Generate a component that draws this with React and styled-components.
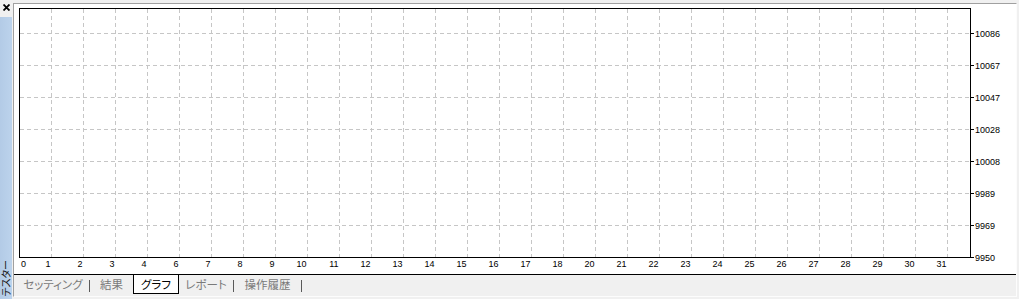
import React from "react";
import styled, { createGlobalStyle } from "styled-components";

const GlobalStyle = createGlobalStyle`
  html, body {
    margin: 0;
    padding: 0;
    background: #f0f0f0;
  }
  body {
    font-family: "Noto Sans CJK JP", "Liberation Sans", sans-serif;
  }
`;

const xLabels = [0, 1, 2, 3, 4, 6, 7, 8, 9, 10, 11, 12, 13, 14, 15, 16, 17, 18, 20, 21, 22, 23, 24, 25, 26, 27, 28, 29, 30, 31];
const yLabels = [9950, 9969, 9989, 10008, 10028, 10047, 10067, 10086];

// widths taken from the tab strip
const tabs = [
  { label: "セッティング", w: 72, sep: true },
  { label: "結果", w: 43 },
  { label: "グラフ", w: 46, active: true },
  { label: "レポート", w: 54, sep: true },
  { label: "操作履歴", w: 67, sep: true },
];

const CHART_W = 951;
const CHART_H = 249;
const CELL = 32;

const Chart = () => {
  const vLines = [];
  for (let k = 1; k * CELL < CHART_W; k++) vLines.push(k * CELL);
  const hLines = [];
  for (let j = 1; j * CELL < CHART_H; j++) hLines.push(CHART_H - j * CELL);

  return (
    <svg width="996" height="266" style={{ display: "block" }}>
      <g stroke="#c6c6c6" strokeWidth="1" strokeDasharray="4 3">
        {vLines.map((x) => (
          <line key={"v" + x} x1={x + 0.5} y1={1} x2={x + 0.5} y2={CHART_H} />
        ))}
        {hLines.map((y) => (
          <line key={"h" + y} x1={1} y1={y + 0.5} x2={CHART_W} y2={y + 0.5} />
        ))}
      </g>
      <rect x="0.5" y="0.5" width={CHART_W} height={CHART_H} fill="none" stroke="#000" />
      <g fontFamily='"Liberation Sans", Arial, sans-serif' fontSize="9" fill="#000">
        {xLabels.map((n, k) =>
          k === 0 ? (
            <text key={n} x={2} y={259}>{n}</text>
          ) : (
            <text key={n} x={k * CELL - 0.5} y={259} textAnchor="end">{n}</text>
          )
        )}
        {yLabels.map((v, j) => {
          const y = CHART_H - j * CELL;
          return (
            <g key={v}>
              <line x1={CHART_W + 1} y1={y + 0.5} x2={CHART_W + 4} y2={y + 0.5} stroke="#000" />
              <text x={956} y={y + 3.5}>{v}</text>
            </g>
          );
        })}
      </g>
    </svg>
  );
};

const CloseIcon = () => (
  <svg width="7" height="7" viewBox="0 0 7 7">
    <path d="M0.5 0.5 L6.5 6.5 M6.5 0.5 L0.5 6.5" stroke="#000" strokeWidth="1.8" />
  </svg>
);

const App = () => {
  return (
    <>
      <GlobalStyle />
      <Window>
        <SideStrip>
          <CloseRow>
            <CloseIcon />
          </CloseRow>
          <BlueBar>
            <SideTitle>テスター</SideTitle>
          </BlueBar>
        </SideStrip>
        <Main>
          <Frame>
            <ChartPanel>
              <Chart />
            </ChartPanel>
            <TabBar>
              {tabs.map((t) => (
                <React.Fragment key={t.label}>
                  <Tab $active={t.active} $w={t.w}>{t.label}</Tab>
                  {t.sep && <Sep />}
                </React.Fragment>
              ))}
            </TabBar>
          </Frame>
        </Main>
      </Window>
    </>
  );
};

export default App;

const Window = styled.div`
  display: flex;
  width: 1019px;
  height: 299px;
  background: #f0f0f0;
  overflow: hidden;
`;

const SideStrip = styled.div`
  width: 12px;
  display: flex;
  flex-direction: column;
`;

const CloseRow = styled.div`
  height: 17px;
  padding: 4px 0 0 3px;
  box-sizing: border-box;
  display: flex;
  align-items: flex-start;
`;

const BlueBar = styled.div`
  flex: 1;
  background: linear-gradient(to right, #b3cbe6, #bcd3ec);
  display: flex;
  flex-direction: column;
  justify-content: flex-end;
  align-items: center;
  padding-bottom: 2px;
`;

const SideTitle = styled.div`
  writing-mode: vertical-rl;
  text-orientation: sideways;
  transform: rotate(180deg);
  font-size: 10px;
  line-height: 12px;
  color: #1a1a1a;
  font-feature-settings: "palt";
`;

const Main = styled.div`
  flex: 1;
  padding: 3px 2px 2px 1px;
  display: flex;
`;

const Frame = styled.div`
  flex: 1;
  display: flex;
  flex-direction: column;
  border-top: 1px solid #a0a0a0;
  border-left: 1px solid #a0a0a0;
  border-right: 1px solid #fcfcfc;
  border-bottom: 1px solid #fcfcfc;
`;

const ChartPanel = styled.div`
  background: #fff;
  border-bottom: 1px solid #000;
  padding: 4px 0 0 5px;
  height: 266px;
`;

const TabBar = styled.div`
  flex: 1;
  display: flex;
  align-items: flex-start;
  padding-left: 3px;
`;

const Tab = styled.div`
  width: ${(p) => p.$w}px;
  box-sizing: border-box;
  height: 19px;
  line-height: 18px;
  text-align: center;
  font-size: 11.5px;
  font-feature-settings: "palt";
  color: ${(p) => (p.$active ? "#000" : "#7a7a7a")};
  background: ${(p) => (p.$active ? "#fff" : "transparent")};
  border: 1px solid ${(p) => (p.$active ? "#000" : "transparent")};
  border-top: none;
  white-space: nowrap;
`;

const Sep = styled.div`
  width: 1px;
  height: 12px;
  margin-top: 5px;
  background: #5a5a5a;
`;
